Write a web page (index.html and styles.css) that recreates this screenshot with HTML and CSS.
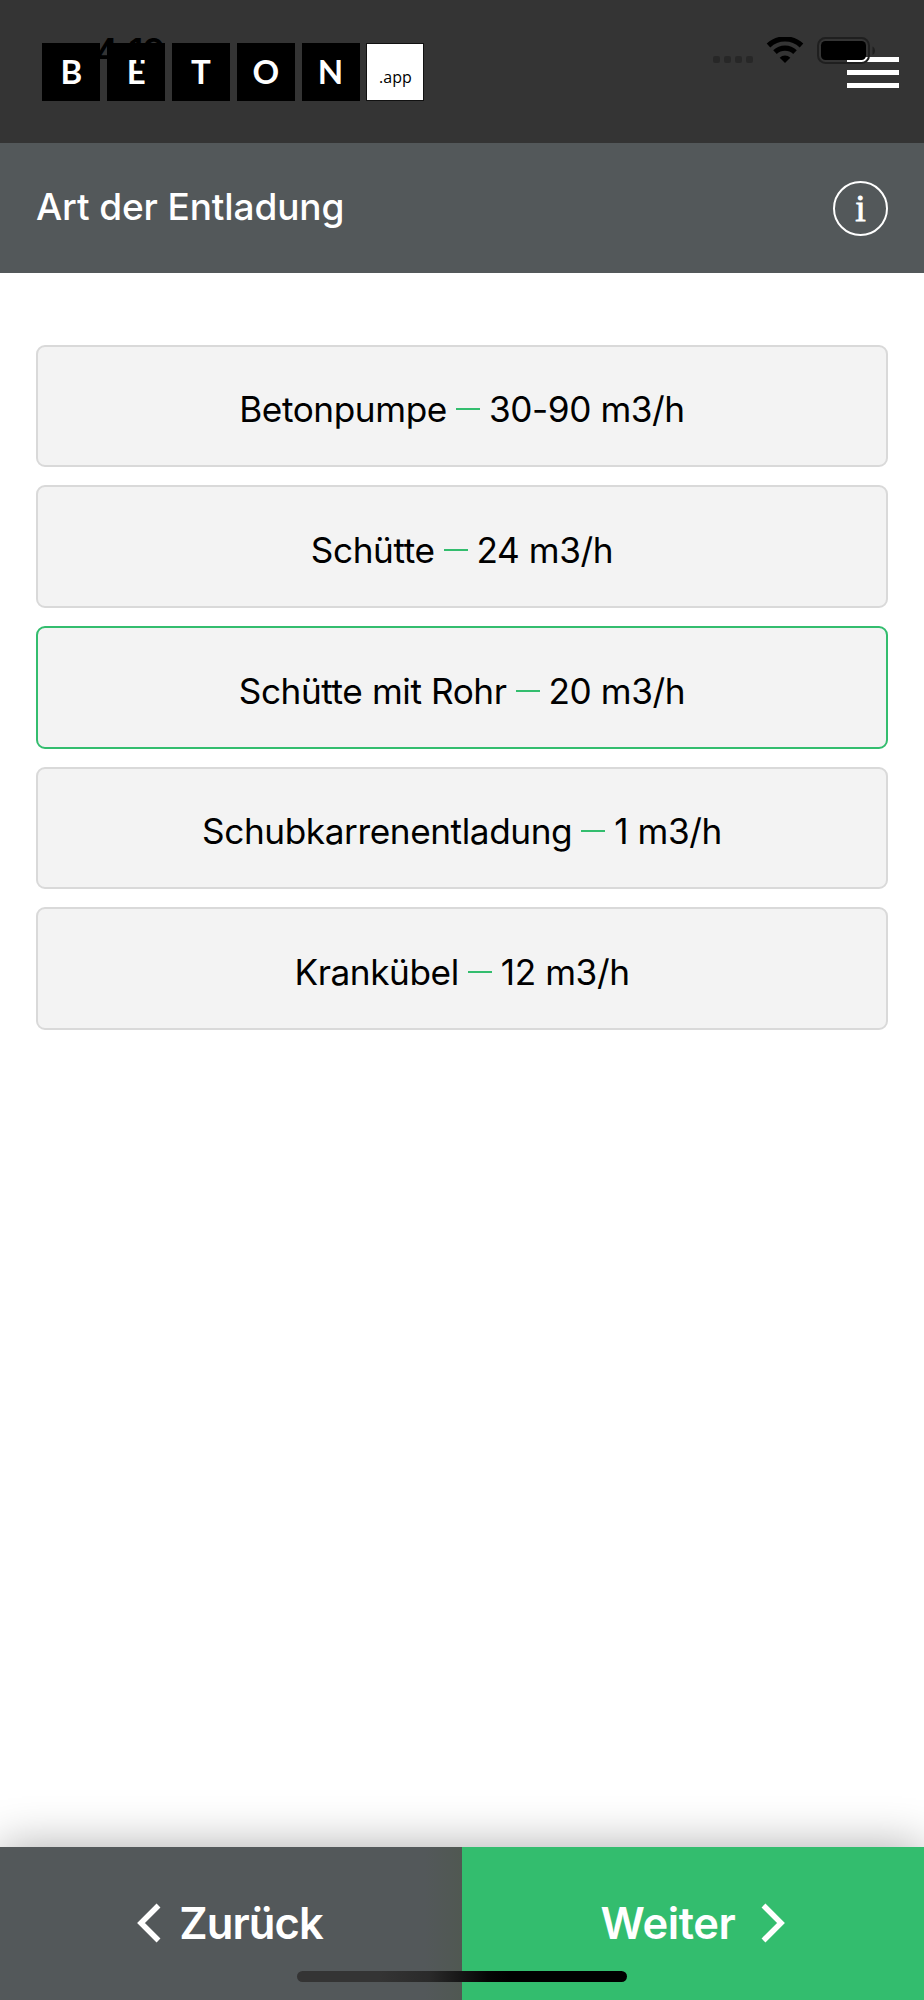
FILE: index.html
```
<!DOCTYPE html>
<html lang="de">

<head>
    <meta charset="UTF-8">
    <meta name="viewport" content="width=device-width, initial-scale=1">
    <title>Art der Entladung</title>
    <link rel="stylesheet" href="styles.css">
</head>

<body>
    <header class="topbar">
        <div class="logo">
            <span>B</span>
            <span>E</span>
            <span>T</span>
            <span>O</span>
            <span>N</span>
            <span class="app">.app</span>
        </div>
        <button class="burger" aria-label="Menü"><i></i><i></i><i></i></button>
        <div class="status">
            <span class="clock">4:19</span>
            <svg class="status-icons" width="164" height="28" viewBox="0 0 164 28">
                <g fill="#272727">
                    <rect x="1" y="19" width="7" height="7" rx="2" />
                    <rect x="12" y="19" width="7" height="7" rx="2" />
                    <rect x="23" y="19" width="7" height="7" rx="2" />
                    <rect x="34" y="19" width="7" height="7" rx="2" />
                </g>
                <g fill="none" stroke="#000" stroke-width="5.2">
                    <path d="M56.5 8.5a24 24 0 0 1 33 0" />
                    <path d="M63 15.2a14.500 14.500 0 0 1 20 0" />
                </g>
                <path d="M73 26l-5.300-5.300a7.600 7.600 0 0 1 10.600 0z" />
                <rect x="106" y="1" width="51" height="25" rx="7.500" fill="none" stroke="#1f1f1f" stroke-width="2" />
                <rect x="109" y="4" width="45" height="19" rx="4.500" />
                <path d="M160.500 9.500c3.300 1.500 3.300 7 0 8.500z" fill="#1f1f1f" />
            </svg>
        </div>
    </header>

    <section class="titlebar">
        <h1>Art der Entladung</h1>
        <button class="info" aria-label="Info">i</button>
    </section>

    <main>
        <button class="option"><span>Betonpumpe</span><i></i><span>30-90 m3/h</span></button>
        <button class="option"><span>Schütte</span><i></i><span>24 m3/h</span></button>
        <button class="option valgt"><span>Schütte mit Rohr</span><i></i><span>20 m3/h</span></button>
        <button class="option"><span>Schubkarrenentladung</span><i></i><span>1 m3/h</span></button>
        <button class="option"><span>Krankübel</span><i></i><span>12 m3/h</span></button>
    </main>

    <footer>
        <button class="back">
            <svg width="24" height="40" viewBox="0 0 24 40"><path d="M21.500 2.500L4 20l17.500 17.500" /></svg>
            <span>Zurück</span>
        </button>
        <button class="next">
            <span>Weiter</span>
            <svg width="24" height="40" viewBox="0 0 24 40"><path d="M2.500 2.500L20 20 2.500 37.500" /></svg>
        </button>
        <div class="home"></div>
    </footer>
</body>

</html>
```
FILE: styles.css
```
* {
    box-sizing: border-box;
}

body {
    margin: 0;
    height: 2000px;
    display: flex;
    flex-direction: column;
    background-color: #fff;
    font-family: Inter, "Liberation Sans", sans-serif;
    overflow: hidden;
}

button {
    border: none;
    padding: 0;
    background: none;
    font-family: inherit;
    color: inherit;
    cursor: pointer;
}

.topbar {
    position: relative;
    height: 143px;
    flex: none;
    display: flex;
    justify-content: space-between;
    align-items: center;
    padding: 0 25px 0 42.400px;
    background-color: #343434;
}

.logo {
    display: flex;
    gap: 6.800px;
}

.logo span {
    width: 58px;
    height: 58px;
    background-color: #000;
    color: #fff;
    font: 700 33px/56px Lato, sans-serif;
    text-align: center;
}

.logo .app {
    border: 1px solid #111;
    background-color: #fff;
    color: #000;
    font: 400 16px/66px "Open Sans", sans-serif;
}

.burger {
    width: 52px;
    display: flex;
    flex-direction: column;
    gap: 8.600px;
    padding-top: 2px;
}

.burger i {
    height: 4.400px;
    background-color: #fff;
}

/* system status bar, drawn over the app header */
.status {
    position: absolute;
    top: 37px;
    left: 95px;
    right: 48px;
    display: flex;
    justify-content: space-between;
    pointer-events: none;
}

.clock {
    font-size: 35px;
    font-weight: 600;
    line-height: 28px;
    letter-spacing: -0.500px;
}

.titlebar {
    height: 130px;
    flex: none;
    display: flex;
    justify-content: space-between;
    align-items: center;
    padding: 0 36px;
    background-color: #53585a;
    color: #fff;
}

h1 {
    margin: 0;
    padding-bottom: 2px;
    font-size: 37px;
    font-weight: 480;
    line-height: 44px;
    letter-spacing: -0.120px;
}

.info {
    width: 55px;
    height: 55px;
    border: 2.500px solid #fff;
    border-radius: 50%;
    font: 38px/48px "Liberation Serif", serif;
    -webkit-text-stroke: 0.800px #fff;
}

main {
    flex: 1;
    display: flex;
    flex-direction: column;
    gap: 18.170px;
    padding: 71.700px 36px 0;
}

.option {
    height: 122.500px;
    display: flex;
    justify-content: center;
    align-items: center;
    gap: 9px;
    border: 2px solid #d9d9d9;
    border-radius: 9px;
    background-color: #f3f3f3;
    color: #000;
    font-size: 35.200px;
    letter-spacing: -0.420px;
    padding-top: 7px;
}

.option i {
    width: 24px;
    height: 2px;
    background-color: #33bd6e;
}

.option.valgt {
    border-color: #33bd6e;
}

footer {
    position: relative;
    height: 153.500px;
    flex: none;
    display: flex;
    box-shadow: 0 0 45px rgba(0, 0, 0, 0.33);
    color: #fff;
    font-size: 43.500px;
    font-weight: 600;
}

footer button {
    width: 50%;
    display: flex;
    justify-content: center;
    align-items: center;
    font-size: inherit;
    font-weight: inherit;
}

footer svg {
    fill: none;
    stroke: #fff;
    stroke-width: 5.500;
}

.back {
    gap: 18px;
    padding-right: 2px;
    background: linear-gradient(90deg, #53585a 92%, #505852);
    letter-spacing: -0.900px;
}

.next {
    gap: 26px;
    background-color: #33bd6e;
    letter-spacing: -0.400px;
}

.home {
    position: absolute;
    left: 297px;
    bottom: 18px;
    width: 330px;
    height: 11px;
    border-radius: 6px;
    background: linear-gradient(90deg, #343434 25%, #2a2a2a 40%, #050505 58%, #000 65%);
}
```
